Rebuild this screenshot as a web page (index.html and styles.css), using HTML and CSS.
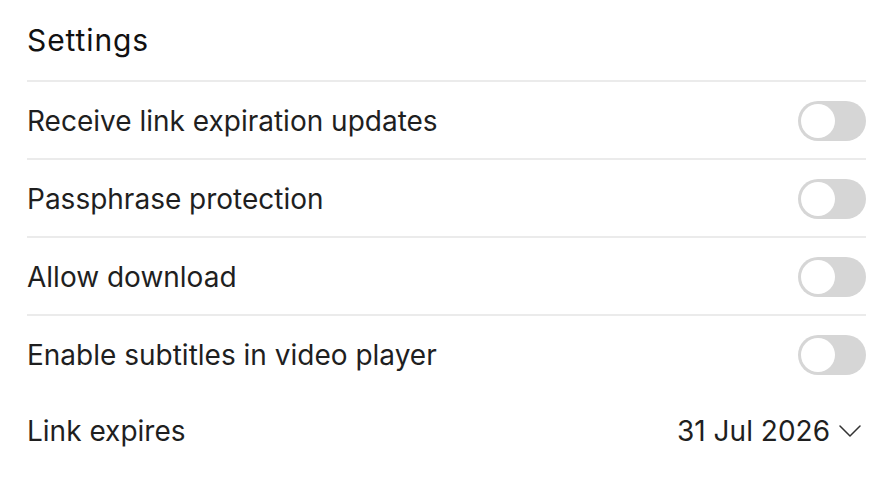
FILE: index.html
```html
<!DOCTYPE html>
<html lang="en">
<head>
    <meta charset="UTF-8">
    <meta name="viewport" content="width=device-width, initial-scale=1.0">
    <title>Settings</title>
    <link rel="stylesheet" href="styles.css">
</head>
<body>
    <div class="settings">
        <h2 class="settings-title">Settings</h2>
        <div class="setting-row bordered">
            <span class="label">Receive link expiration updates</span>
            <button class="toggle" aria-label="Receive link expiration updates"><span class="knob"></span></button>
        </div>
        <div class="setting-row bordered">
            <span class="label">Passphrase protection</span>
            <button class="toggle" aria-label="Passphrase protection"><span class="knob"></span></button>
        </div>
        <div class="setting-row bordered">
            <span class="label">Allow download</span>
            <button class="toggle" aria-label="Allow download"><span class="knob"></span></button>
        </div>
        <div class="setting-row bordered">
            <span class="label">Enable subtitles in video player</span>
            <button class="toggle" aria-label="Enable subtitles in video player"><span class="knob"></span></button>
        </div>
        <div class="setting-row">
            <span class="label">Link expires</span>
            <button class="date-select">
                31 Jul 2026
                <svg width="22" height="12" viewBox="0 0 22 12" fill="none">
                    <path d="M1 1l10 10L21 1" stroke="#333" stroke-width="1.5" stroke-linecap="round" stroke-linejoin="round"/>
                </svg>
            </button>
        </div>
    </div>
</body>
</html>
```

FILE: styles.css
```css
body {
    margin: 0;
    background-color: #ffffff;
    font-family: 'Inter', 'Noto Sans', sans-serif;
    color: #1f1f1f;
}
.settings {
    padding: 0 20px 0 27px;
}
.settings-title {
    margin: 0;
    padding: 20px 0;
    font-size: 30px;
    font-weight: 400;
    letter-spacing: 0.9px;
    line-height: 40px;
    color: #111;
}
.setting-row {
    display: flex;
    align-items: center;
    justify-content: space-between;
    height: 74px;
    padding-top: 2px;
}
.bordered {
    border-top: 2px solid #ebebeb;
}
.label {
    font-size: 28px;
}
.toggle {
    width: 68px;
    height: 40px;
    padding: 3px;
    border: none;
    border-radius: 20px;
    background-color: #d6d6d6;
    cursor: pointer;
    display: flex;
    align-items: center;
}
.knob {
    width: 34px;
    height: 34px;
    border-radius: 50%;
    background-color: #ffffff;
}
.date-select {
    display: flex;
    align-items: center;
    gap: 9px;
    margin-right: 5px;
    padding: 0;
    border: none;
    background: none;
    font-family: inherit;
    font-size: 28px;
    color: #1f1f1f;
    cursor: pointer;
}
```
